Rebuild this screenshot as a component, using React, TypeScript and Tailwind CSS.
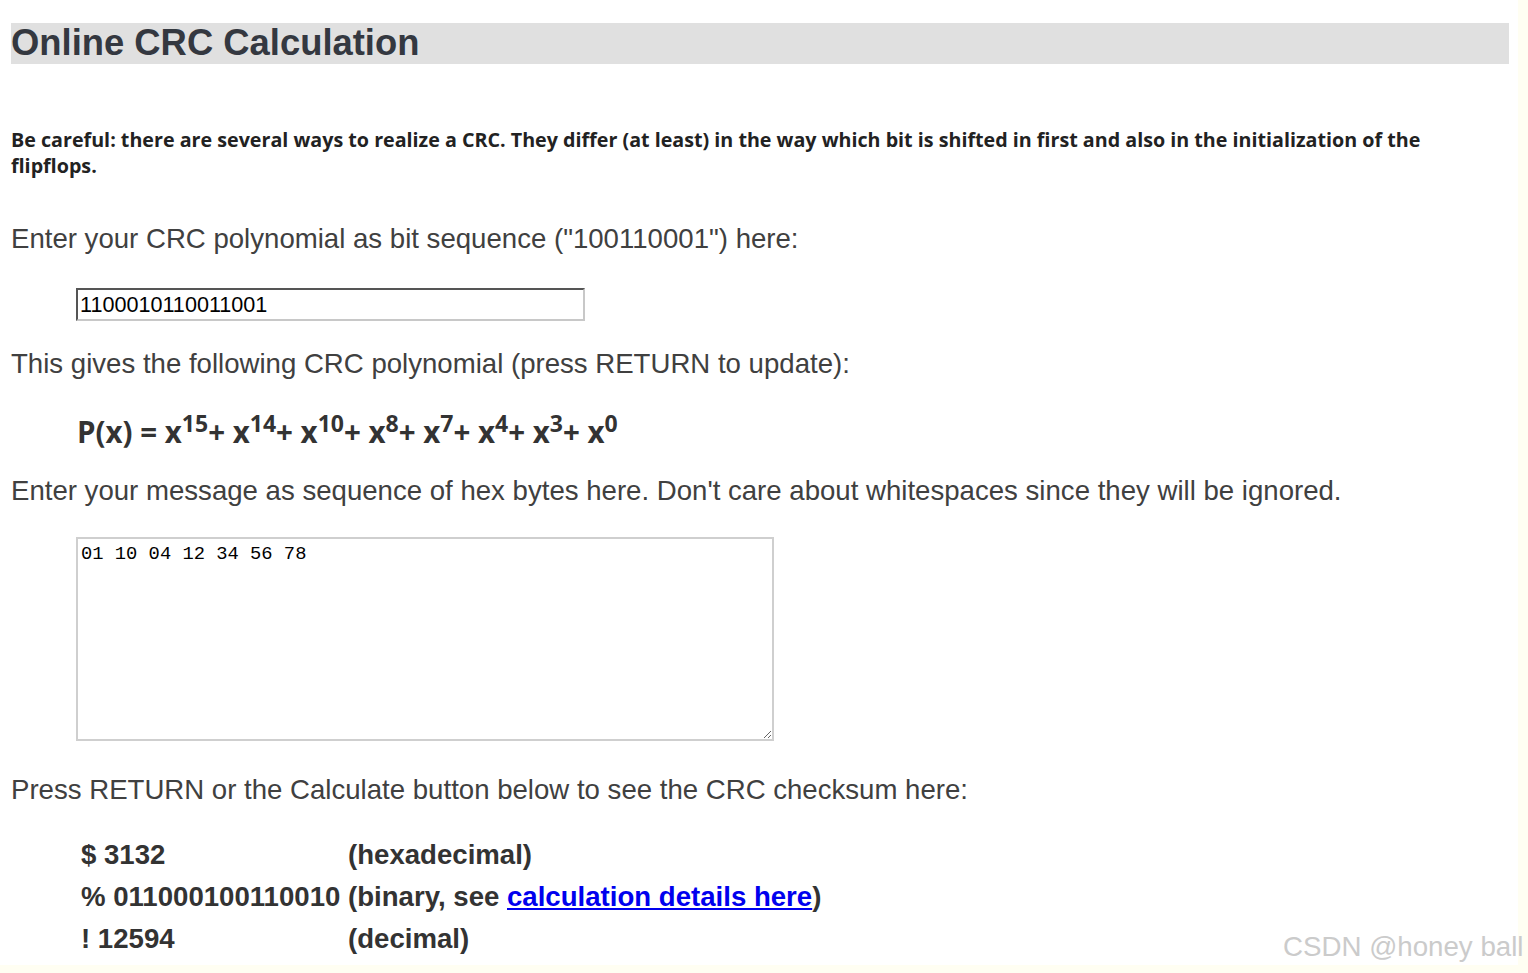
import React from 'react'

const terms = ['15', '14', '10', '8', '7', '4', '3', '0']

const results = [
    { value: '$ 3132', label: '(hexadecimal)', link: false },
    { value: '% 011000100110010', label: '(binary, see ', link: true },
    { value: '! 12594', label: '(decimal)', link: false },
]

function App() {
    return (
        <div className="relative h-[973px] w-full overflow-hidden bg-[#fffef2]">
            <div className="flex h-[965px]">
                <div className="w-[1518px] bg-white pl-[11px] pt-[23px] text-[#404040] font-['Liberation_Sans',Arial,sans-serif]">
                    <div className="flex h-[41px] w-[1498px] items-center bg-[#e0e0e0]">
                        <h1 className="text-[36.4px] font-bold leading-none text-[#343840]">Online CRC Calculation</h1>
                    </div>

                    <p className="mt-[63px] w-[1440px] text-[19.7px] font-bold leading-[26px] text-[#222] font-['Open_Sans','Noto_Sans',sans-serif]">
                        Be careful: there are several ways to realize a CRC. They differ (at least) in the way which bit is shifted in first and also in the initialization of the flipflops.
                    </p>

                    <p className="mt-[45px] text-[27.6px] leading-[30px]">Enter your CRC polynomial as bit sequence ("100110001") here:</p>

                    <input
                        readOnly
                        value="1100010110011001"
                        className="ml-[65px] mt-[34px] block h-[33px] w-[509px] border-2 border-t-[#555] border-l-[#555] border-b-[#c8c8c8] border-r-[#c8c8c8] bg-white px-[2px] text-[21.6px] text-black outline-none font-['Liberation_Sans',Arial,sans-serif]"
                    />

                    <p className="mt-[28px] text-[27.6px] leading-[30px]">This gives the following CRC polynomial (press RETURN to update):</p>

                    <p className="ml-[66px] mt-[35px] text-[29.5px] font-bold leading-[36px] text-[#333] font-['Open_Sans','Noto_Sans',sans-serif]">
                        P(x) ={' '}
                        {terms.map((t, i) => (
                            <span key={t}>
                                x<sup className="text-[23px]">{t}</sup>
                                {i < terms.length - 1 ? '+ ' : ''}
                            </span>
                        ))}
                    </p>

                    <p className="mt-[26px] text-[27.6px] leading-[30px]">Enter your message as sequence of hex bytes here. Don't care about whitespaces since they will be ignored.</p>

                    <textarea
                        readOnly
                        value="01 10 04 12 34 56 78"
                        className="ml-[65px] mt-[31px] block h-[204px] w-[698px] resize border-2 border-[#cfcfcf] bg-white px-[3px] py-[3px] text-[18.8px] leading-[24px] text-black outline-none font-['Liberation_Mono','DejaVu_Sans_Mono',monospace]"
                    />

                    <p className="mt-[34px] text-[27.6px] leading-[30px]">Press RETURN or the Calculate button below to see the CRC checksum here:</p>

                    <div className="ml-[70px] mt-[29px] text-[27.6px] font-bold leading-[42px] text-[#333]">
                        {results.map((r) => (
                            <div key={r.value} className="flex">
                                <span className="w-[267px]">{r.value}</span>
                                <span>
                                    {r.label}
                                    {r.link && (
                                        <>
                                            <a href="#" className="text-[#0000ee] underline">calculation details here</a>)
                                        </>
                                    )}
                                </span>
                            </div>
                        ))}
                    </div>
                </div>
                <div className="flex-1 bg-[#fffef2]" />
            </div>

            <span className="absolute left-[1283px] top-[929px] text-[27.7px] leading-[36px] text-[#cbcbcb] font-['Liberation_Sans',Arial,sans-serif]">
                CSDN @honey ball
            </span>
        </div>
    )
}

export default App
